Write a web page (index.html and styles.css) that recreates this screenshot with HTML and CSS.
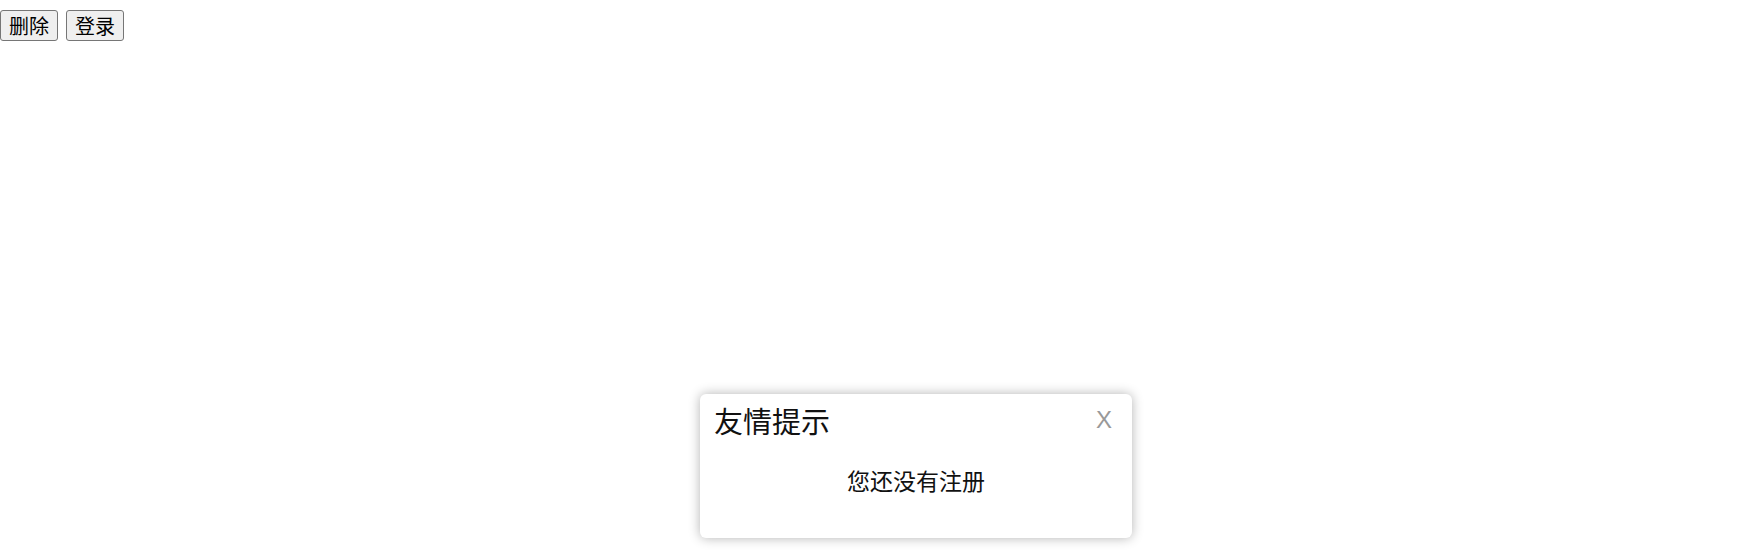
FILE: index.html
```html
<!DOCTYPE html>
<html lang="zh">
<head>
<meta charset="utf-8">
<title>提示</title>
<link rel="stylesheet" href="styles.css">
</head>
<body>
<div class="toolbar">
  <button class="btn" type="button">删除</button>
  <button class="btn" type="button">登录</button>
</div>
<div class="dialog">
  <div class="dialog-head">
    <span class="dialog-title">友情提示</span>
    <span class="dialog-close">X</span>
  </div>
  <div class="dialog-body">您还没有注册</div>
</div>
</body>
</html>
```
FILE: styles.css
```css
html, body {
  margin: 0;
  padding: 0;
  background: #fff;
  font-family: "Noto Sans CJK SC", "Noto Sans", sans-serif;
}
.toolbar {
  display: flex;
  gap: 8px;
  padding-top: 10px;
}
.btn {
  height: 31px;
  margin: 0;
  padding: 0 8px;
  font-family: "Noto Sans CJK SC", sans-serif;
  font-size: 20px;
  line-height: 1;
  color: #000;
  background: #efefef;
  border: 1px solid #767676;
  border-radius: 3px;
}
.dialog {
  position: absolute;
  left: 700px;
  top: 394px;
  width: 432px;
  height: 144px;
  box-sizing: border-box;
  background: #fff;
  border-radius: 6px;
  box-shadow: 0 0 12px rgba(0, 0, 0, 0.3);
}
.dialog-head {
  display: flex;
  justify-content: space-between;
  align-items: flex-start;
  padding: 6px 20px 0 14px;
}
.dialog-title {
  font-size: 29px;
  line-height: 40px;
  color: #111;
}
.dialog-close {
  font-family: "Liberation Sans", sans-serif;
  font-size: 24px;
  line-height: 40px;
  color: #999;
}
.dialog-body {
  text-align: center;
  font-size: 23px;
  line-height: 32px;
  color: #111;
  padding-top: 24px;
}
```
